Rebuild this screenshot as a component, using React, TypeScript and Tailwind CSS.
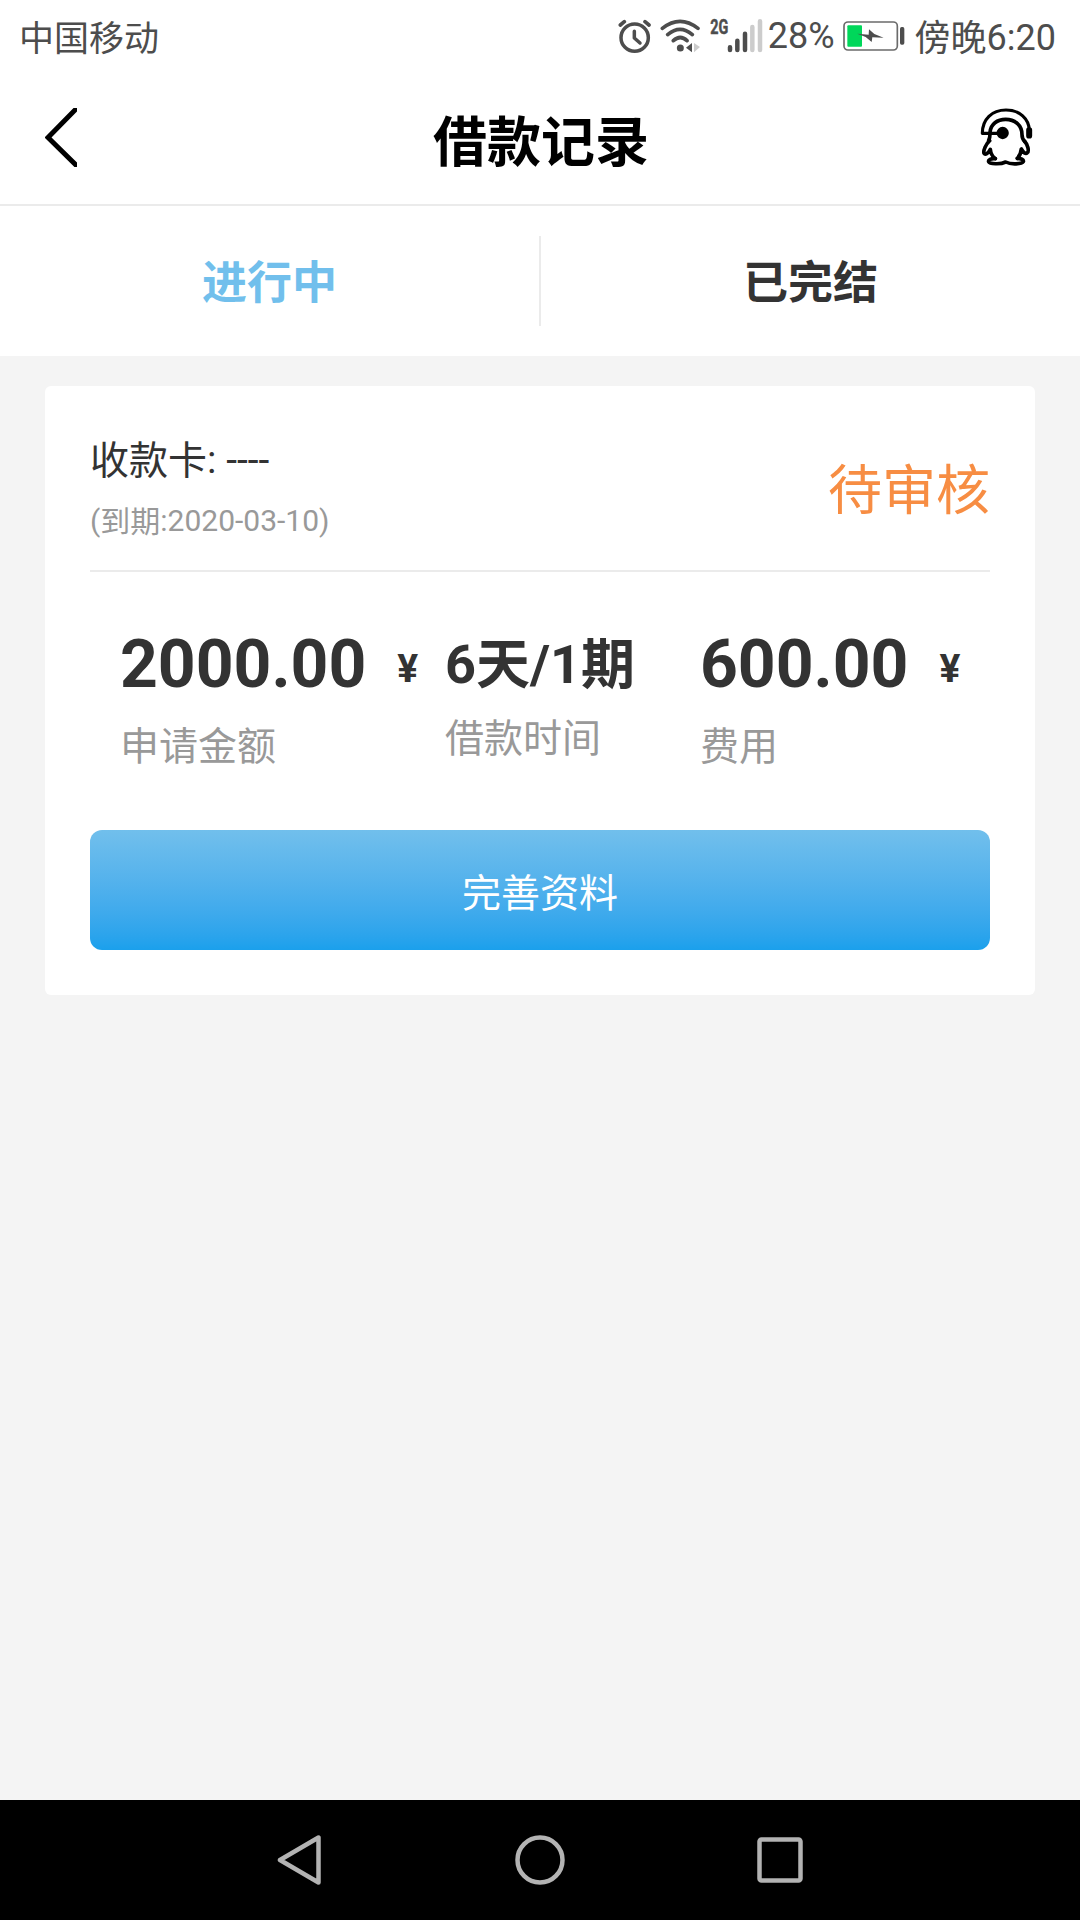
import React from "react";

interface LoanStatProps {
  value: React.ReactNode;
  label: string;
  unit?: string;
  className?: string;
}

const AlarmIcon = () => (
  <svg className="ml-[17px] h-[35px] w-[34px]" viewBox="53 57 102 105" fill="none" stroke="#4d4d4d" strokeLinecap="round">
    <circle cx="103" cy="113" r="41" strokeWidth="10.5" />
    <path d="M102 94v20l17 15" strokeWidth="10.5" strokeLinejoin="round" />
    <path d="M60 75l12-10M146 75l-12-10" strokeWidth="11" />
  </svg>
);

const WifiIcon = () => (
  <svg className="ml-2 h-[35px] w-[41px]" viewBox="180 57 123 105" fill="none" stroke="#4d4d4d" strokeLinecap="round">
    <path d="M187 85Q240 43 294 85M203 104Q240 72 277 104M220 122Q241 103 261 122" strokeWidth="11" />
    <circle cx="241" cy="144" r="10.5" fill="#4d4d4d" stroke="none" />
    <path d="M276 129v28l-18-14z" fill="#4d4d4d" stroke="none" />
    <path d="M282 129v28l18-16z" fill="#cccccc" stroke="none" />
  </svg>
);

const SignalIcon = () => (
  <svg className="ml-[9px] h-[49px] w-[53px]" viewBox="330 36 159 147" fill="none" strokeWidth="13.5" strokeLinecap="round">
    <text x="331" y="102" textLength="54" lengthAdjust="spacingAndGlyphs" fill="#4d4d4d" stroke="#4d4d4d" strokeWidth="1.5" className="font-[Roboto] text-[62px] font-bold">2G</text>
    <path d="M390 142v8M412 122v28M435 101v49" stroke="#4d4d4d" />
    <path d="M457 81v69M480 64v86" stroke="#cccccc" />
  </svg>
);

const BatteryIcon = () => (
  <svg className="ml-2 h-[30px] w-[62px]" viewBox="69 62 186 90">
    <rect x="72" y="65" width="160" height="84" rx="12" fill="#fff" stroke="#6b6b6b" strokeWidth="5" />
    <rect x="82" y="75" width="44" height="64" rx="3" fill="#00d75a" />
    <path d="M112 100l34 3 1-16 16 14 28 11-34-1-2 14-18-15z" fill="#4d4d4d" />
    <rect x="240" y="80" width="13" height="53" rx="5" fill="#4d4d4d" />
  </svg>
);

const ServiceIcon = () => (
  <svg className="mb-0.5 h-[58px] w-[53px]" viewBox="60 55 159 174" fill="none" stroke="#000" strokeWidth="11" strokeLinecap="round" strokeLinejoin="round">
    <path d="M125 131H67C67 88 96 61 138 61c42 0 68 27 70 60" strokeWidth="9.5" />
    <path d="M90 128c2-25 22-39 47-39 27 0 49 17 49 46 0 9 3 15 8 20" />
    <path d="M90 133c0 8-1 13-4 19M89 153c-11 10-20 30-17 38 4 6 14-1 19-12 1 13 6 21 15 28M194 155c9 9 14 29 8 34-5 5-12 0-18-11-1 13-5 21-12 28" />
    <path d="M106 207c-14-1-22 3-20 9 3 7 35 9 51 1 17 9 49 6 53-1 2-6-7-10-18-10" />
    <circle cx="128" cy="130" r="16" fill="#000" strokeWidth="5" />
    <rect x="202" y="116" width="11" height="27" rx="5" fill="#000" strokeWidth="7" />
  </svg>
);

// Chinese glyphs sit slightly lower than the digits next to them
const Cn: React.FC<{ children: React.ReactNode }> = ({ children }) => (
  <span className="align-[-1px] leading-none">{children}</span>
);

const StatusBar = () => (
  <div className="flex h-[72px] justify-between pl-[19px] pr-6 text-[36px] leading-[72px] text-[#4d4d4d]">
    <span className="mt-1 text-[35px]">中国移动</span>
    <div className="flex h-[72px] items-center">
      <AlarmIcon />
      <WifiIcon />
      <SignalIcon />
      <span className="ml-[5px]">28%</span>
      <BatteryIcon />
      <span className="ml-[10px] mt-1"><Cn>傍晚</Cn>6:20</span>
    </div>
  </div>
);

const Header = () => (
  <header className="flex h-[134px] items-center justify-between border-b-2 border-[#ebebeb] pl-[45px] pr-[47px]">
    <svg className="mb-px h-[59px] w-8" viewBox="0 0 32 59" fill="none" stroke="#000" strokeWidth="5">
      <path d="M34 -2L3 29.5L34 60" />
    </svg>
    <h1 className="ml-[25px] mt-[11px] text-[54px] font-bold text-black">借款记录</h1>
    <ServiceIcon />
  </header>
);

const LoanStat: React.FC<LoanStatProps> = ({ value, label, unit, className = "" }) => (
  <div className={className}>
    <div className="flex h-[80px] items-center font-bold">
      <span className={unit ? "text-[66px] leading-[80px]" : "text-[54px] leading-[80px]"}>{value}</span>
      {unit && <span className="ml-[31px] mt-[8px] text-[39px] leading-[80px]">{unit}</span>}
    </div>
    <div className={unit ? "mt-[14px] text-[39px] leading-[56px] text-[#999]" : "mt-[6px] text-[39px] leading-[56px] text-[#999]"}>
      {label}
    </div>
  </div>
);

const LoanCard = () => (
  <section className="mx-[45px] mt-[30px] h-[609px] rounded-md bg-white px-[45px]">
    <div className="flex h-[186px] items-center justify-between border-b-2 border-[#ebebeb]">
      <div className="mt-[24px]">
        <p className="h-[62px] text-[39px] leading-[62px]"><Cn>收款卡</Cn>: ----</p>
        <p className="h-[60px] text-[30px] leading-[60px] text-[#999]">(<Cn>到期</Cn>:2020-03-10)</p>
      </div>
      <span className="mt-[27px] text-[54px] text-[#f78d43]">待审核</span>
    </div>
    <div className="flex h-[258px] px-[30px] pt-[53px]">
      <LoanStat className="w-[325px] shrink-0" value="2000.00" unit="¥" label="申请金额" />
      <LoanStat className="w-[255px] shrink-0" value={<>6<Cn>天</Cn>/1<Cn>期</Cn></>} label="借款时间" />
      <LoanStat className="shrink-0" value="600.00" unit="¥" label="费用" />
    </div>
    <button className="h-[120px] w-full rounded-xl bg-linear-to-b from-[#71bfec] to-[#1aa0ec] pt-[8px] text-[39px] text-white">
      完善资料
    </button>
  </section>
);

const NavBar = () => (
  <nav className="flex h-[120px] items-center justify-center gap-[190px] bg-black">
    <svg className="h-[50px] w-[50px]" viewBox="0 0 50 50" fill="none" stroke="#b3b3b3" strokeWidth="4.5" strokeLinejoin="round">
      <path d="M43.5 2.5v45L5 25z" />
    </svg>
    <svg className="h-[50px] w-[50px]" viewBox="0 0 50 50" fill="none" stroke="#b3b3b3" strokeWidth="4.5">
      <circle cx="25" cy="25" r="22.5" />
    </svg>
    <svg className="h-[50px] w-[50px]" viewBox="0 0 50 50" fill="none" stroke="#b3b3b3" strokeWidth="4.5">
      <rect x="4.5" y="4.5" width="41" height="41" rx="2" />
    </svg>
  </nav>
);

export default function App() {
  return (
    <div className="flex h-[1920px] w-[1080px] flex-col overflow-hidden bg-[#f4f4f4] font-[Roboto,'Noto_Sans_CJK_SC',sans-serif] text-[#333]">
      <div className="bg-white">
        <StatusBar />
        <Header />
        {/* Tabs */}
        <div className="flex h-[150px] items-center text-[45px] font-bold">
          <button className="flex-1 pt-[6px] text-[#71bfec]">进行中</button>
          <div className="h-[90px] w-0.5 bg-[#ebebeb]" />
          <button className="flex-1 pt-[6px]">已完结</button>
        </div>
      </div>
      <main className="flex-1">
        <LoanCard />
      </main>
      <NavBar />
    </div>
  );
}
